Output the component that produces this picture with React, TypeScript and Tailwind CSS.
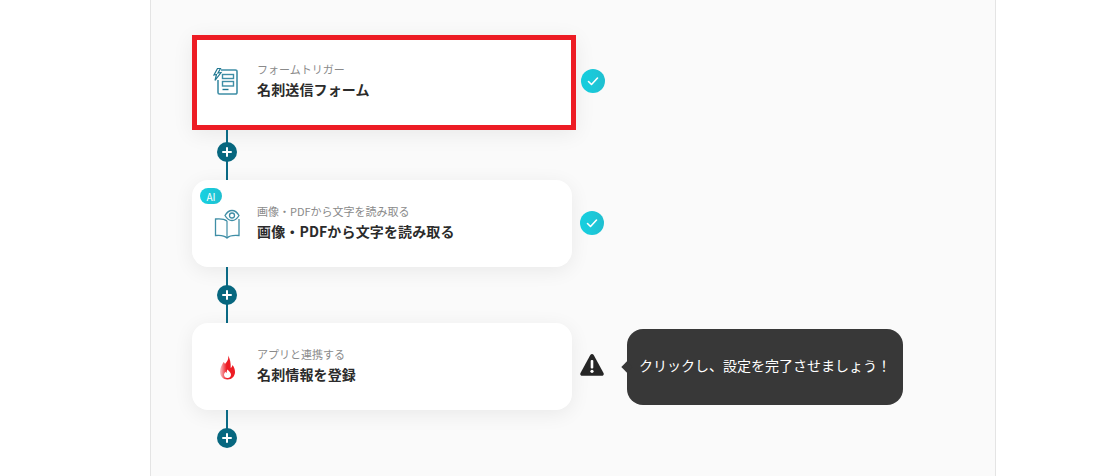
import { Fragment, type ReactNode } from "react";

const FONT = "font-['Noto_Sans_CJK_JP','Noto_Sans',sans-serif]";

function FormIcon() {
  return (
    <svg width="30" height="30" viewBox="0 0 30 30" fill="none" stroke="#3f8ea6" strokeWidth="1.4">
      <path d="M9 2h14.500A1.500 1.500 0 0 1 25 3.500v21a1.500 1.500 0 0 1-1.500 1.500h-16A1.500 1.500 0 0 1 6 24.500V12" strokeWidth="1.600" />
      <path d="M5.500 0.500 2 7l2.500-.5L3 12.500 9 4.500l-3 .5L8.500.5z" fill="#ffffff" stroke="#1f7690" strokeWidth="1.200" />
      <rect x="10.500" y="6.500" width="11" height="4" />
      <rect x="10.500" y="13.500" width="11" height="4.500" />
      <path d="M10.500 21.500h6" stroke="#1f7690" />
    </svg>
  );
}

function BookIcon() {
  return (
    <svg width="30" height="30" viewBox="0 0 30 30" fill="none" stroke="#3f8ea6" strokeWidth="1.300">
      <path d="M15 12C12.500 10 8 9.500 3.500 10v16.500c4.500-.5 9 0 11.500 2.500 2.500-2.500 7-3 12-2.500V10" />
      <path d="M15 12v17" strokeWidth="1.200" />
      <path d="M13 6.500C15 3 17.500 1.500 20 1.500S25 3 27 6.500C25 10 22.500 11.500 20 11.500S15 10 13 6.500z" fill="#ffffff" />
      <circle cx="20" cy="6.500" r="2.500" />
    </svg>
  );
}

function FlameIcon() {
  return (
    <svg width="30" height="30" viewBox="0 0 30 30">
      <defs>
        <linearGradient id="flameFade" x1="0" x2="1" y1="0" y2="0">
          <stop offset="0" stopColor="#f9c6c9" />
          <stop offset="0.45" stopColor="#ed1c24" />
        </linearGradient>
      </defs>
      <path d="M16 3.500c1 4-1 6-3 8.500-.5-1-.8-1.500-1.500-2C10 13 8 15.500 8 19.500c0 4.500 3 8 7.500 8s7.500-3.500 7.500-7.500c0-3-1-5-2.500-7-.3 1.500-.8 2.300-1.800 3 .3-5-.7-9.500-2.700-12.500z" fill="url(#flameFade)" />
      <path d="M15.500 17.500c1.500 1.500 3.500 3 3.500 5.500a3.500 3.500 0 0 1-3.500 3 3.500 3.500 0 0 1-3.500-3c0-1.500.7-2.500 1.500-3.300.3.700.5 1 1 1.300.3-1.200.3-2.500 1-3.500z" fill="#ffffff" />
    </svg>
  );
}

function CheckBadge() {
  return (
    <div className="flex h-6 w-6 items-center justify-center rounded-full bg-gradient-to-r from-[#16d2e2] to-[#1fbfd0]">
      <svg width="14" height="14" viewBox="0 0 14 14" fill="none" stroke="#ffffff" strokeWidth="1.600" strokeLinecap="round" strokeLinejoin="round">
        <path d="M2.500 7.500 5.500 10.500 11.500 4" />
      </svg>
    </div>
  );
}

function WarningBadge() {
  return (
    <svg width="24" height="24" viewBox="0 0 24 24">
      <path d="M12 1c.7 0 1.300.4 1.700 1l9.800 18c.7 1.300-.1 2.800-1.700 2.800H2.200c-1.600 0-2.400-1.500-1.700-2.800L10.300 2c.4-.6 1-1 1.700-1z" fill="#262626" />
      <rect x="10.700" y="7" width="2.600" height="8.500" rx="1" fill="#ffffff" />
      <circle cx="12" cy="18.300" r="1.600" fill="#ffffff" />
    </svg>
  );
}

function Connector({ height, circleTop }: { height: number; circleTop: string }) {
  return (
    <div
      className="relative ml-[34px] flex w-[2px] flex-col items-center bg-[#0a6a85]"
      style={{ height }}
    >
      <div className={`absolute flex h-5 w-5 items-center justify-center rounded-full bg-[#07677f] ${circleTop}`}>
        <svg width="10" height="10" viewBox="0 0 10 10" stroke="#ffffff" strokeWidth="2" strokeLinecap="round">
          <path d="M5 1v8M1 5h8" />
        </svg>
      </div>
    </div>
  );
}

function StepCard({
  icon,
  caption,
  title,
  active,
  ai,
}: {
  icon: ReactNode;
  caption: string;
  title: string;
  active?: boolean;
  ai?: boolean;
}) {
  return (
    <div
      className={
        active
          ? "relative flex h-[95px] w-[384px] items-center border-[5px] border-[#ed1c24] bg-white pl-[15px] shadow-[0_4px_20px_rgba(0,0,0,0.07)]"
          : "relative flex h-[87px] w-[380px] items-center rounded-2xl bg-white pl-5 shadow-[0_4px_20px_rgba(0,0,0,0.07)]"
      }
    >
      {ai && (
        <span className="absolute left-2 top-2 flex h-4 w-[22px] items-center justify-center rounded-full bg-gradient-to-r from-[#16d2e2] to-[#1fbfd0] text-[10px] text-white">
          AI
        </span>
      )}
      <div className="flex h-[30px] w-[30px] items-center justify-center">{icon}</div>
      <div className={`ml-[15px] flex flex-col ${active ? "mb-[8px]" : "mb-[5px]"}`}>
        <span className="text-[11px] leading-[20px] text-[#8a8a8a]">{caption}</span>
        <span className="text-[14px] leading-[20px] font-bold tracking-[0.01em] text-[#2b2b2b]">{title}</span>
      </div>
    </div>
  );
}

export default function App() {
  const steps = [
    { icon: <FormIcon />, caption: "フォームトリガー", title: "名刺送信フォーム", active: true, status: <CheckBadge />, statusClass: "ml-[5px] mb-[3px]" },
    { icon: <BookIcon />, caption: "画像・PDFから文字を読み取る", title: "画像・PDFから文字を読み取る", ai: true, status: <CheckBadge />, statusClass: "ml-[8px] mb-[1px]" },
    { icon: <FlameIcon />, caption: "アプリと連携する", title: "名刺情報を登録", status: <WarningBadge />, statusClass: "ml-[8px] mb-[3px]" },
  ];

  return (
    <div className={`h-[476px] w-[1100px] overflow-hidden bg-white ${FONT}`}>
      <div className="ml-[150px] flex h-full w-[846px] flex-col border-x border-[#e4e4e4] bg-[#fafafa] pl-[41px] pt-[35px]">
        {steps.map((step, i) => (
          <Fragment key={step.title}>
            <div className="flex items-center">
              <StepCard icon={step.icon} caption={step.caption} title={step.title} active={step.active} ai={step.ai} />
              <div className={step.statusClass}>{step.status}</div>
              {i === 2 && (
                <div className="relative ml-[23px] flex h-[76px] w-[276px] items-center justify-center rounded-2xl bg-[#383838] pb-[2px] text-[14px] text-white">
                  <span className="absolute -left-[4px] top-[34px] h-2 w-2 rotate-45 bg-[#383838]" />
                  クリックし、設定を完了させましょう！
                </div>
              )}
            </div>
            <Connector height={i === 0 ? 50 : i === 1 ? 56 : 20} circleTop={i === 0 ? "top-[12px]" : "top-[18px]"} />
          </Fragment>
        ))}
      </div>
    </div>
  );
}
